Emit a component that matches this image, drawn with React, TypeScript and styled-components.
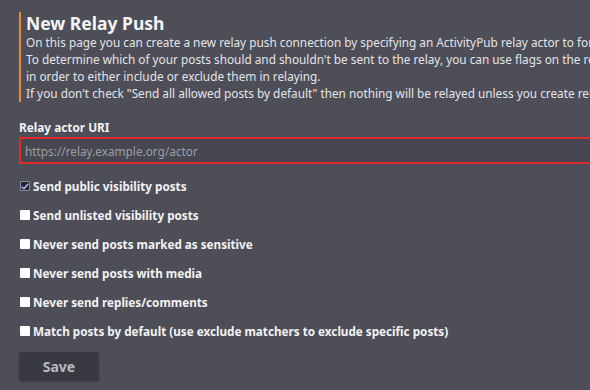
import styled, { createGlobalStyle } from "styled-components";

const GlobalStyle = createGlobalStyle`
  html, body {
    margin: 0;
    padding: 0;
    background: #4d4e57;
    overflow: hidden;
  }
  body {
    font-family: "Noto Sans", "Open Sans", sans-serif;
    color: #e8e8ec;
  }
`;

const options = [
  { label: "Send public visibility posts", checked: true },
  { label: "Send unlisted visibility posts", checked: false },
  { label: "Never send posts marked as sensitive", checked: false },
  { label: "Never send posts with media", checked: false },
  { label: "Never send replies/comments", checked: false },
  {
    label: "Match posts by default (use exclude matchers to exclude specific posts)",
    checked: false,
  },
];

const lines = [
  "On this page you can create a new relay push connection by specifying an ActivityPub relay actor to forward your posts to.",
  "To determine which of your posts should and shouldn't be sent to the relay, you can use flags on the relay push connection and matchers",
  "in order to either include or exclude them in relaying.",
  'If you don\'t check "Send all allowed posts by default" then nothing will be relayed unless you create relay matchers.',
];

const App = () => {
  return (
    <>
      <GlobalStyle />
      <Page>
        <Intro>
          <Title>New Relay Push</Title>
          {lines.map((line) => (
            <Line key={line}>{line}</Line>
          ))}
        </Intro>
        <Form>
          <Field>
            <Label htmlFor="actor">Relay actor URI</Label>
            <Input id="actor" placeholder="https://relay.example.org/actor" />
          </Field>
          <Options>
            {options.map((opt) => (
              <CheckRow key={opt.label}>
                <Box $checked={opt.checked}>
                  {opt.checked && (
                    <svg width="8" height="7" viewBox="0 0 8 7">
                      <path
                        d="M0.8 3.8 L3 5.8 L7.2 0.8"
                        fill="none"
                        stroke="#a9c1f7"
                        strokeWidth="1.4"
                      />
                    </svg>
                  )}
                </Box>
                <CheckLabel>{opt.label}</CheckLabel>
              </CheckRow>
            ))}
          </Options>
          <Save type="button">Save</Save>
        </Form>
      </Page>
    </>
  );
};

const Page = styled.div`
  width: 1100px;
  padding: 12px 19px;
`;

const Intro = styled.div`
  border-left: 2px solid #f08a32;
  padding-left: 5px;
  display: flex;
  flex-direction: column;
`;

const Title = styled.h1`
  margin: 0;
  font-size: 17.5px;
  line-height: 22px;
  font-weight: 700;
  color: #f4f4f6;
`;

const Line = styled.span`
  font-size: 11.8px;
  line-height: 17px;
  white-space: nowrap;
  color: #e4e4e8;
`;

const Form = styled.form`
  margin-top: 18px;
  display: flex;
  flex-direction: column;
`;

const Field = styled.div`
  display: flex;
  flex-direction: column;
  gap: 2px;
`;

const Label = styled.label`
  font-size: 11.8px;
  line-height: 15px;
  font-weight: 700;
  color: #f2f2f4;
`;

const Input = styled.input`
  box-sizing: border-box;
  height: 27px;
  width: 100%;
  padding: 0 4px;
  background: #464750;
  border: 2px solid #de2b2b;
  border-radius: 1px;
  font-family: "Noto Sans", sans-serif;
  font-size: 11.8px;
  color: #e8e8ec;
  outline: none;
  &::placeholder {
    color: #9d9ea7;
  }
`;

const Options = styled.div`
  margin-top: 13px;
  display: flex;
  flex-direction: column;
  gap: 11px;
`;

const CheckRow = styled.label`
  display: flex;
  align-items: center;
  gap: 3px;
  height: 18px;
`;

const Box = styled.span<{ $checked: boolean }>`
  box-sizing: border-box;
  width: 10px;
  height: 10px;
  margin-left: 1px;
  border-radius: 1px;
  display: flex;
  align-items: center;
  justify-content: center;
  background: ${(p) => (p.$checked ? "#232839" : "#ffffff")};
  border: ${(p) => (p.$checked ? "1px solid #8d909c" : "none")};
`;

const CheckLabel = styled.span`
  font-size: 11.7px;
  font-weight: 700;
  color: #f2f2f4;
  white-space: nowrap;
`;

const Save = styled.button`
  margin-top: 12px;
  width: 80px;
  height: 29px;
  border: none;
  border-radius: 3px;
  background: #393a41;
  color: #b9b9c2;
  font-family: "Noto Sans", sans-serif;
  font-size: 14px;
  font-weight: 700;
  box-shadow: 0 1px 2px rgba(0, 0, 0, 0.2);
`;

export default App;
